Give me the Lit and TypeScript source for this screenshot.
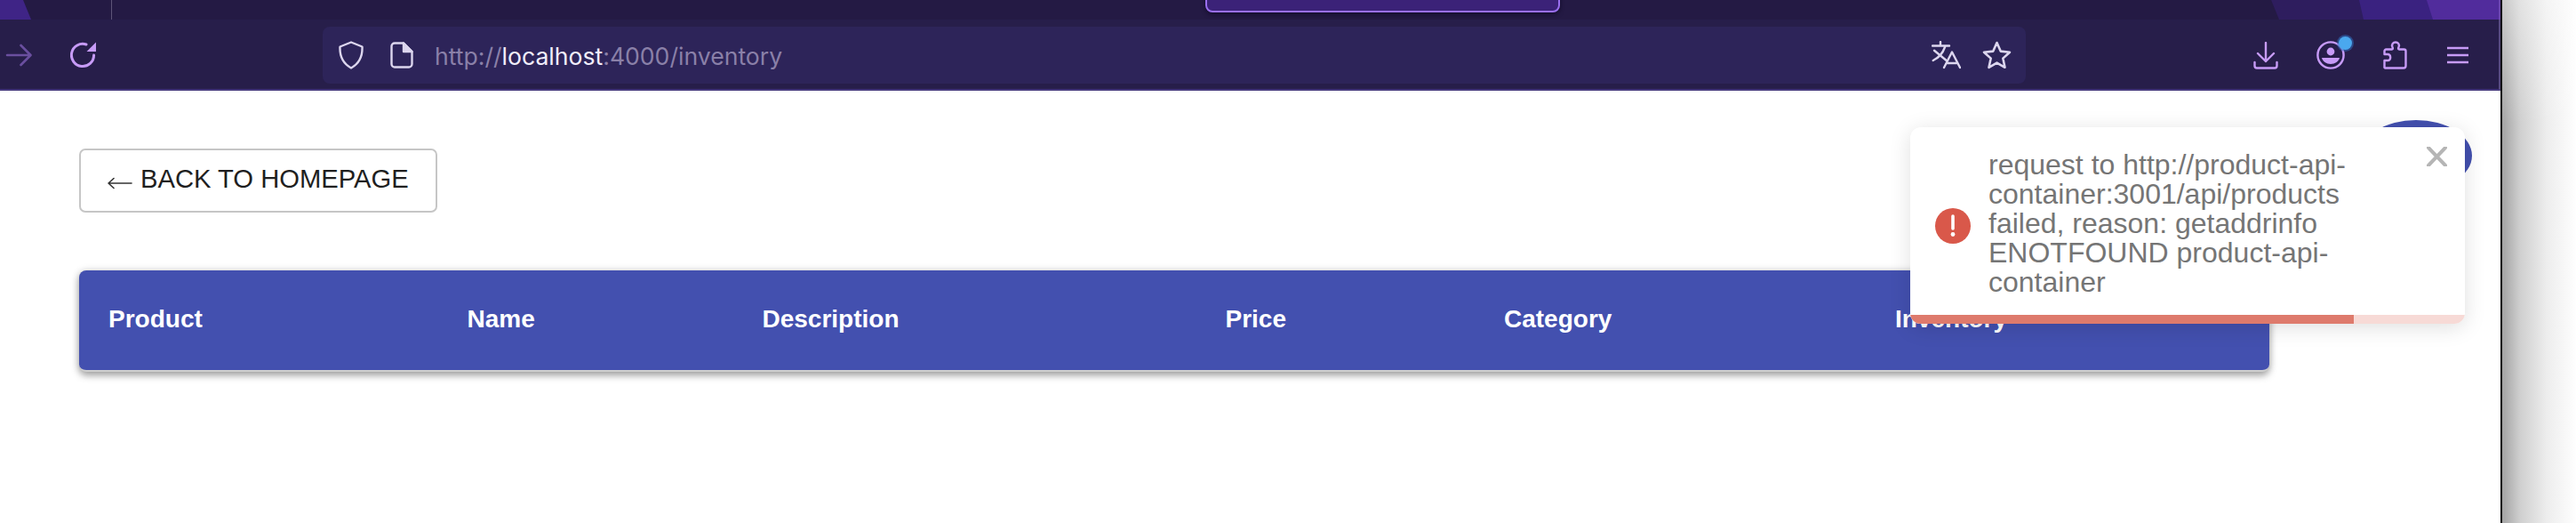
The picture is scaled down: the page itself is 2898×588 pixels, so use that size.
import { LitElement, html, css } from "lit";
import { customElement } from "lit/decorators.js";

const COLUMNS = [
  { label: "Product", width: 403.5 },
  { label: "Name", width: 332 },
  { label: "Description", width: 521 },
  { label: "Price", width: 313.5 },
  { label: "Category", width: 440 },
  { label: "Inventory", width: 300 },
];

@customElement("app-root")
export class AppRoot extends LitElement {
  static styles = css`
    :host {
      display: flex;
      width: 2898px;
      height: 588px;
      overflow: hidden;
      background: #fff;
      font-family: "Liberation Sans", Arial, sans-serif;
    }
    * {
      box-sizing: border-box;
    }
    svg {
      display: block;
      flex: none;
      fill: none;
      stroke-linecap: round;
      stroke-linejoin: round;
    }

    .window {
      position: relative;
      width: 2813px;
      flex: none;
      display: flex;
      flex-direction: column;
    }
    .edge {
      width: 2px;
      flex: none;
      background: #111;
    }
    .desktop {
      flex: 1;
      background:
        linear-gradient(180deg, rgba(255, 255, 255, 0.4), rgba(255, 255, 255, 0) 140px),
        linear-gradient(90deg, #a3a3a3 0, #cfcfcf 20px, #ededed 50px, #fff 85px);
    }

    .tabstrip {
      position: relative;
      height: 22px;
      flex: none;
      background: #241a44;
      border-right: 2px solid #6a45ae;
      overflow: hidden;
    }
    .waves {
      position: absolute;
      inset: 0;
    }
    .divider {
      position: absolute;
      left: 125px;
      top: 0;
      width: 1px;
      height: 22px;
      background: #5d5478;
    }
    .tab {
      position: absolute;
      left: 1356px;
      top: -20px;
      width: 399px;
      height: 34px;
      background: #3b2278;
      border: 2px solid #9a6ff0;
      border-radius: 8px;
      box-shadow: 0 2px 5px rgba(10, 5, 30, 0.6);
    }

    .toolbar {
      height: 80px;
      flex: none;
      display: flex;
      align-items: center;
      padding-top: 2px;
      background: #271e4a;
      border-bottom: 2px solid #43367a;
      border-right: 2px solid #55497f;
    }
    .forward {
      margin-left: 6px;
      color: #6a4f9f;
    }
    .reload {
      margin-left: 43px;
      color: #c79bf7;
    }
    .urlbar {
      margin-left: 254px;
      width: 1916px;
      height: 64px;
      flex: none;
      display: flex;
      align-items: center;
      padding-left: 18px;
      background: #2d2459;
      border-radius: 8px;
      color: #dcd6ee;
    }
    .url {
      margin-left: 24px;
      margin-top: 2px;
      font: 26.6px Inter, "Liberation Sans", sans-serif;
      color: #8a80a8;
      white-space: nowrap;
    }
    .url b {
      font-weight: 400;
      color: #f1edfb;
    }
    .file {
      margin-left: 30px;
    }
    .translate {
      margin-left: auto;
    }
    .star {
      margin-left: 24px;
      margin-right: 16px;
    }
    .actions {
      display: flex;
      align-items: center;
      margin-left: 256px;
      color: #c79bf7;
    }
    .profile {
      position: relative;
      margin-left: 43px;
    }
    .badge {
      position: absolute;
      right: -8px;
      top: -5px;
      width: 15px;
      height: 15px;
      border-radius: 50%;
      background: #4aa8ee;
      box-shadow: 0 0 0 2px rgba(50, 110, 190, 0.55);
    }
    .puzzle {
      margin-left: 43px;
    }
    .menu {
      margin-left: 45px;
    }

    .page {
      flex: 1;
      position: relative;
      background: #fff;
      padding: 33px 32px 0 89px;
    }
    .top {
      display: flex;
      justify-content: space-between;
      align-items: flex-start;
    }
    .back {
      margin-top: 32px;
      width: 403px;
      height: 72px;
      display: flex;
      align-items: center;
      padding-left: 30px;
      padding-bottom: 4px;
      border: 2px solid #c6c6c6;
      border-radius: 7px;
      background: #fff;
      color: #1f1f1f;
      font-size: 29.2px;
      white-space: nowrap;
    }
    .back svg {
      margin-right: 9px;
      margin-top: 9px;
      color: #333;
    }
    .add {
      width: 126px;
      height: 80px;
      border-radius: 50%;
      background: #4350af;
    }

    .thead {
      margin-top: 65px;
      width: 2464px;
      height: 114px;
      display: flex;
      align-items: center;
      padding-bottom: 2px;
      padding-left: 33px;
      border-radius: 8px;
      background: #4350af;
      border-bottom: 2px solid #cfcfcf;
      box-shadow: 0 4px 8px rgba(0, 0, 0, 0.35), 0 0 10px rgba(0, 0, 0, 0.12);
      color: #fff;
      font-size: 28px;
      font-weight: 700;
    }
    .thead span {
      flex: none;
    }

    .toast {
      position: absolute;
      left: 2149px;
      top: 143px;
      width: 624px;
      height: 221px;
      display: flex;
      flex-direction: column;
      background: #fff;
      border-radius: 12px;
      overflow: hidden;
      box-shadow: 0 4px 24px rgba(0, 0, 0, 0.13);
    }
    .toast-body {
      flex: 1;
      display: flex;
      align-items: center;
      padding-top: 10px;
      padding-left: 28px;
    }
    .toast-text {
      width: 450px;
      margin-left: 20px;
      margin-top: -5px;
      font-size: 32px;
      line-height: 33px;
      color: #757575;
    }
    .close {
      position: absolute;
      left: 581px;
      top: 22px;
      color: #b5b5b5;
    }
    .track {
      height: 10px;
      flex: none;
      background: #f7dad6;
    }
    .bar {
      height: 100%;
      background: #de7a6c;
    }
  `;

  render() {
    return html`
      <div class="window">
        <div class="tabstrip">
          <svg class="waves" width="2811" height="22">
            <path d="M0 0H26L35 22H0Z" fill="#3f2486" />
            <path d="M2555 0H2811V22H2564Z" fill="#2e1d5e" />
            <path d="M2654 0H2811V22H2659Z" fill="#3a2280" />
            <path d="M2730 0H2811V22H2737Z" fill="#512c9c" />
          </svg>
          <div class="divider"></div>
          <div class="tab"></div>
        </div>

        <div class="toolbar">
          <svg class="forward" width="30" height="30" viewBox="0 0 30 30" stroke="currentColor" stroke-width="2.6">
            <path d="M2 15H28M17.5 4L28.5 15L17.5 26" />
          </svg>
          <svg class="reload" width="30" height="32" viewBox="0 0 30 32" stroke="currentColor" stroke-width="3">
            <path d="M26.6 16A12.6 12.6 0 1 1 18 4" />
            <path d="M29 1.5V12H18.5Z" fill="currentColor" stroke="none" />
          </svg>

          <div class="urlbar">
            <svg width="28" height="32" viewBox="0 0 28 32" stroke="currentColor" stroke-width="2.4">
              <path d="M14 1.5L26.5 6.5C27 17 24 25 14 30.5C4 25 1 17 1.5 6.5Z" />
            </svg>
            <svg class="file" width="26" height="30" viewBox="0 0 26 30" stroke="currentColor" stroke-width="2.4">
              <path d="M15 1.5H5A3.5 3.5 0 0 0 1.5 5V25A3.5 3.5 0 0 0 5 28.5H21A3.5 3.5 0 0 0 24.5 25V11Z" />
              <path d="M15 1.5L24.5 11H15Z" fill="currentColor" />
            </svg>
            <div class="url">http://<b>localhost</b>:4000/inventory</div>
            <svg class="translate" width="33" height="32" viewBox="0 0 33 32" stroke="currentColor" stroke-width="2.4">
              <path d="M1 5.5H20M10 1V5.5M3 10.7L16.7 22M15 7C12.5 14 8 19 1.7 22" />
              <path d="M14 30L23 12.5L32 30M17.5 25H28.5" />
            </svg>
            <svg class="star" width="33" height="32" viewBox="0 0 33 32" stroke="currentColor" stroke-width="2.6">
              <path d="M16.5 2L20.7 11.6L31 12.7L23.3 19.6L25.5 29.8L16.5 24.6L7.5 29.8L9.7 19.6L2 12.7L12.3 11.6Z" />
            </svg>
          </div>

          <div class="actions">
            <svg width="28" height="31" viewBox="0 0 28 31" stroke="currentColor" stroke-width="2.4">
              <path d="M14 1V22M5 13L14 22L23 13" />
              <path d="M1.5 23V27A2.5 2.5 0 0 0 4 29.5H24A2.5 2.5 0 0 0 26.5 27V23" />
            </svg>
            <div class="profile">
              <svg width="32" height="32" viewBox="0 0 32 32" stroke="currentColor" stroke-width="2.4">
                <circle cx="16" cy="16" r="14.6" />
                <circle cx="16" cy="12" r="4.4" fill="currentColor" stroke="none" />
                <path d="M6 19H26C25 23 21 26 16 26C11 26 7 23 6 19Z" fill="currentColor" stroke="none" />
              </svg>
              <div class="badge"></div>
            </div>
            <svg class="puzzle" width="27" height="32" viewBox="0 0 27 32" stroke="currentColor" stroke-width="2.4">
              <path d="M2 30.5H23A2.5 2.5 0 0 0 25.5 28V11.5A2 2 0 0 0 23.5 9.5H18C17 9 17 8 17.5 7C19 3.5 16.5 1.5 14 1.5C11.5 1.5 9 3.5 10.5 7C11 8 11 9 10 9.5H3.5A2 2 0 0 0 1.5 11.5V15H5C9 15 9.5 22 5 22H1.5V30Z" />
            </svg>
            <svg class="menu" width="24" height="20" viewBox="0 0 24 20" stroke="currentColor" stroke-width="2.4" stroke-linecap="butt">
              <path d="M0 2H24M0 10H24M0 18H24" />
            </svg>
          </div>
        </div>

        <div class="page">
          <div class="top">
            <div class="back">
              <svg width="28" height="16" viewBox="0 0 28 16" stroke="currentColor" stroke-width="1.6">
                <path d="M1 8H27M7 2.5L1 8L7 13.5" />
              </svg>
              BACK TO HOMEPAGE
            </div>
            <div class="add"></div>
          </div>
          <div class="thead">
            ${COLUMNS.map((c) => html`<span style="width:${c.width}px">${c.label}</span>`)}
          </div>
        </div>

        <div class="toast">
          <div class="toast-body">
            <svg width="40" height="40" viewBox="0 0 40 40">
              <circle cx="20" cy="20" r="20" fill="#d9584a" />
              <path d="M20 9V23" stroke="#fff" stroke-width="3.6" />
              <circle cx="20" cy="29.5" r="2.4" fill="#fff" />
            </svg>
            <div class="toast-text">request to http://product-api-container:3001/api/products failed, reason: getaddrinfo ENOTFOUND product-api-container</div>
          </div>
          <svg class="close" width="23" height="22" viewBox="0 0 23 22" stroke="currentColor" stroke-width="4" stroke-linecap="butt">
            <path d="M2 1L21 21M21 1L2 21" />
          </svg>
          <div class="track"><div class="bar" style="width:${(499 / 624) * 100}%"></div></div>
        </div>
      </div>
      <div class="edge"></div>
      <div class="desktop"></div>
    `;
  }
}
